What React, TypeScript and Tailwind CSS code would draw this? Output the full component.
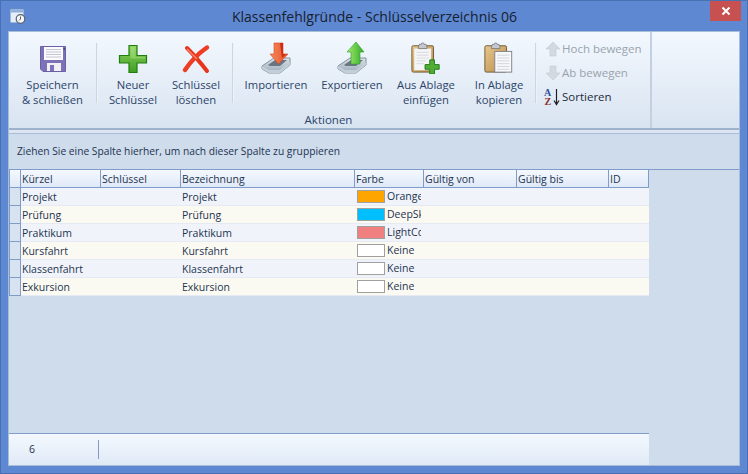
import React from "react";

const font = { fontFamily: '"Open Sans", "Noto Sans", sans-serif' };

function Defs() {
  return (
    <svg width="0" height="0" className="absolute">
      <defs>
        <linearGradient id="gGreen" x1="0" y1="0" x2="0" y2="1">
          <stop offset="0" stopColor="#8fd45f" />
          <stop offset="1" stopColor="#3f9e22" />
        </linearGradient>
        <linearGradient id="gRed" x1="0" y1="0" x2="1" y2="0">
          <stop offset="0" stopColor="#f58a5a" />
          <stop offset="1" stopColor="#e8502c" />
        </linearGradient>
        <linearGradient id="gArrowG" x1="0" y1="0" x2="1" y2="0">
          <stop offset="0" stopColor="#a6ec6a" />
          <stop offset="1" stopColor="#2fa92c" />
        </linearGradient>
        <linearGradient id="gTray" x1="0" y1="0" x2="0" y2="1">
          <stop offset="0" stopColor="#dbe3ea" />
          <stop offset="1" stopColor="#9aa9b8" />
        </linearGradient>
        <linearGradient id="gClip" x1="0" y1="0" x2="1" y2="1">
          <stop offset="0" stopColor="#e8c88f" />
          <stop offset="1" stopColor="#b98a45" />
        </linearGradient>
      </defs>
    </svg>
  );
}

function Floppy() {
  return (
    <svg width="32" height="32" viewBox="0 0 32 32">
      <path d="M3.500 4.500h25v25H6l-2.500-2.500z" fill="#7d72b8" stroke="#6a60a6" />
      <rect x="7" y="5" width="19" height="13" fill="#fbfbfd" />
      <path d="M9 7.500h15M9 10h15M9 12.500h15M9 15h15" stroke="#c4c6d2" strokeWidth="1" />
      <rect x="10" y="21" width="14" height="8" fill="#f1f1f4" />
      <rect x="13" y="23" width="4" height="6" fill="#7d72b8" />
      <rect x="26.500" y="6" width="1.500" height="2" fill="#4d4590" />
    </svg>
  );
}

function Plus() {
  return (
    <svg width="30" height="30" viewBox="0 0 30 30">
      <path d="M11 1.500h8v10h9.500v7.500H19v9.500h-8V19H1.500v-7.500H11z" fill="url(#gGreen)" stroke="#1f7d12" strokeWidth="1.200" />
      <path d="M12.500 3h5v10h9.500v1.500H12.500z" fill="#a9e07f" opacity="0.5" />
    </svg>
  );
}

function Cross() {
  return (
    <svg width="30" height="30" viewBox="0 0 30 30">
      <path d="M6 4 C12 10 19 18 26 27" stroke="#e8341c" strokeWidth="4" strokeLinecap="round" fill="none" />
      <path d="M26 3.500 C18 9 10 17 4 26" stroke="#ee3d22" strokeWidth="4.500" strokeLinecap="round" fill="none" />
      <path d="M6 5 C10 9 13 12 16 15" stroke="#f98a70" strokeWidth="1.200" fill="none" />
    </svg>
  );
}

function Tray({ children }: { children: React.ReactNode }) {
  return (
    <svg width="32" height="32" viewBox="0 0 32 32">
      <path d="M2 24 L14 16 H30 V23 L20 31 H9 L2 27 Z" fill="url(#gTray)" stroke="#6d7c8a" strokeWidth="0.800" />
      <path d="M8 23 L15 18 H27 L20 24 H10 Z" fill="#6a7580" />
      <path d="M2 24 L9 28 H20 L30 20 V23 L20 31 H9 L2 27Z" fill="#c3ced8" />
      {children}
    </svg>
  );
}

function ImportIco() {
  return (
    <Tray>
      <path d="M14 1h9v11h5l-9.500 10L10 12h4z" fill="url(#gRed)" stroke="#d6451f" strokeWidth="0.600" />
      <path d="M20 1h3v11h3l-4 4z" fill="#c92f17" />
    </Tray>
  );
}

function ExportIco() {
  return (
    <Tray>
      <path d="M20 0 L28 10 H24 V22 H15 V10 H11 Z" fill="url(#gArrowG)" stroke="#2d9d2a" strokeWidth="0.600" />
    </Tray>
  );
}

function Clip({ paper = true }: { paper?: boolean }) {
  return (
    <>
      <rect x="1" y="4" width="23" height="28" rx="1.500" fill="url(#gClip)" stroke="#6c5a33" />
      {paper && <rect x="3.500" y="7" width="18" height="23" fill="#f4f5f7" />}
      <path d="M8 5 L9 2.500 H11 A1.500 1.500 0 0 1 14 2.500 H16 L17 5 V7 H8 Z" fill="#c5c9cf" stroke="#6d7078" strokeWidth="0.800" />
    </>
  );
}

function PasteIco() {
  return (
    <svg width="32" height="32" viewBox="0 0 32 34">
      <Clip />
      <path d="M6 11h13M6 14h13M6 17h13M6 20h10M6 23h8" stroke="#d7dae0" />
      <path d="M20 19h5v5h5v5h-5v5h-5v-5h-5v-5h5z" fill="#52ad35" stroke="#1f7a17" />
    </svg>
  );
}

function CopyIco() {
  return (
    <svg width="32" height="32" viewBox="0 0 32 34">
      <Clip paper={false} />
      <rect x="11.500" y="10" width="18" height="22" fill="#f7f8fa" stroke="#7e8288" />
      <path d="M14 14h13M14 17h13M14 20h13M14 23h13M14 26h13M14 29h13" stroke="#cfd3da" />
    </svg>
  );
}

function RibbonButton({ w, icon, lines }: { w: string; icon: React.ReactNode; lines: string[] }) {
  return (
    <div className={`${w} shrink-0 flex flex-col items-center text-[11.250px] leading-[15px] text-[#2c4468]`}>
      <div className="h-[42px] flex items-end justify-center">{icon}</div>
      <div className="mt-[3px] text-center whitespace-nowrap">
        {lines.map((l) => (
          <div key={l}>{l}</div>
        ))}
      </div>
    </div>
  );
}

function Sep({ className = "" }: { className?: string }) {
  return <div className={`w-[2px] h-[60px] mt-[11px] shrink-0 bg-gradient-to-r from-[#bcc9da] to-[#ffffff] ${className}`} />;
}

function SmallArrow({ up }: { up: boolean }) {
  return (
    <svg width="16" height="16" viewBox="0 0 16 16">
      <path
        d={up ? "M8 1 L15 8 H11 V15 H5 V8 H1 Z" : "M8 15 L15 8 H11 V1 H5 V8 H1 Z"}
        fill="#d3d9e0"
        stroke="#c3c9d1"
        strokeWidth="0.600"
      />
    </svg>
  );
}

function SortIco() {
  return (
    <svg width="18" height="18" viewBox="0 0 18 18">
      <text x="0" y="8" fontSize="10" fontWeight="700" fill="#2f4f9a" fontFamily="Liberation Serif, serif">A</text>
      <text x="0.500" y="17" fontSize="10" fontWeight="700" fill="#8c2f2a" fontFamily="Liberation Serif, serif">Z</text>
      <path d="M12.500 1v15M10 12.500l2.500 4 2.500-4" stroke="#222" strokeWidth="1.200" fill="none" />
    </svg>
  );
}

const cols = "grid grid-cols-[12px_80px_80px_174px_69px_93px_92px_40px] grid-rows-[18px]";

const headers = ["", "Kürzel", "Schlüssel", "Bezeichnung", "Farbe", "Gültig von", "Gültig bis", "ID"];

const rows = [
  { k: "Projekt", c: "#ffa500", t: "Orange" },
  { k: "Prüfung", c: "#00bfff", t: "DeepSkyBlue" },
  { k: "Praktikum", c: "#f08080", t: "LightCoral" },
  { k: "Kursfahrt", c: "#ffffff", t: "Keine" },
  { k: "Klassenfahrt", c: "#ffffff", t: "Keine" },
  { k: "Exkursion", c: "#ffffff", t: "Keine" },
];

export default function App() {
  return (
    <div style={font} className="w-[748px] h-[474px] overflow-hidden bg-[#5f88d2] flex flex-col border border-[#4a70b4]">
      <Defs />
      <div className="h-[30px] shrink-0 flex items-center relative">
        <div className="ml-[9px] w-[16px] h-[16px]">
          <svg width="16" height="16" viewBox="0 0 16 16">
            <rect x="0.500" y="1.500" width="13" height="13" rx="1" fill="#e6eef8" stroke="#9fb6d8" />
            <rect x="1" y="2" width="12" height="2.500" fill="#8fb0dc" />
            <circle cx="10.500" cy="11" r="4.300" fill="#f3f5f8" stroke="#59616d" strokeWidth="1.200" />
            <path d="M10.500 8.500V11l-1.500 1.500" stroke="#59616d" fill="none" />
          </svg>
        </div>
        <div className="flex-1 text-center text-[14px] text-[#16202e] pr-[24px] whitespace-nowrap">
          Klassenfehlgründe - Schlüsselverzeichnis 06
        </div>
        <div className="absolute left-[709px] top-0 w-[31px] h-[20px] bg-[#c75050] flex items-center justify-center">
          <svg width="10" height="10" viewBox="0 0 10 10">
            <path d="M1.500 1.500l7 7M8.500 1.500l-7 7" stroke="#fff" strokeWidth="2" />
          </svg>
        </div>
      </div>

      <div className="flex-1 min-h-0 mx-[7px] mb-[7px] border border-[#a9bcd8] bg-[#cfdcec] flex flex-col">
        <div className="h-[98px] shrink-0 flex bg-gradient-to-b from-[#f3f8fe] to-[#d9e4f1] border-b-2 border-[#9fb2cc]">
          <div className="w-[643px] shrink-0 flex flex-col border-r-2 border-[#c3d0e1]">
            <div className="flex h-[80px]">
              <RibbonButton w="w-[87px]" icon={<Floppy />} lines={["Speichern", "& schließen"]} />
              <Sep />
              <RibbonButton w="w-[70px]" icon={<Plus />} lines={["Neuer", "Schlüssel"]} />
              <RibbonButton w="w-[56px]" icon={<Cross />} lines={["Schlüssel", "löschen"]} />
              <Sep className="ml-[8px]" />
              <RibbonButton w="w-[84px]" icon={<ImportIco />} lines={["Importieren"]} />
              <RibbonButton w="w-[68px]" icon={<ExportIco />} lines={["Exportieren"]} />
              <div className="w-[2px] shrink-0" />
              <RibbonButton w="w-[76px]" icon={<PasteIco />} lines={["Aus Ablage", "einfügen"]} />
              <div className="w-[5px] shrink-0" />
              <RibbonButton w="w-[60px]" icon={<CopyIco />} lines={["In Ablage", "kopieren"]} />
              <Sep className="ml-[6px]" />
              <div className="ml-[7px] flex flex-col text-[11.500px] pt-[4px]">
                <div className="h-[25px] flex items-center gap-[1px] pl-[1px] text-[#9aa3ad]">
                  <SmallArrow up />
                  <span>Hoch bewegen</span>
                </div>
                <div className="h-[24px] flex items-center gap-[1px] pl-[1px] text-[#9aa3ad]">
                  <SmallArrow up={false} />
                  <span>Ab bewegen</span>
                </div>
                <div className="h-[24px] flex items-center text-[#1e2c40]">
                  <SortIco />
                  <span>Sortieren</span>
                </div>
              </div>
            </div>
            <div className="text-center pr-[2px] text-[11.500px] leading-[15px] text-[#2c4468]">Aktionen</div>
          </div>
        </div>

        <div className="h-[4px] shrink-0 bg-[#dce5f1] border-b border-[#a9bcd8]" />

        <div className="h-[36px] shrink-0 flex items-center pt-[1px] pl-[8px] text-[10.250px] text-[#1e3350] border-b border-[#7f9ccb]">
          Ziehen Sie eine Spalte hierher, um nach dieser Spalte zu gruppieren
        </div>

        <div className="w-[640px] text-[10.500px] text-[#1e3350]">
          <div className={`${cols} h-[18px]`}>
            {headers.map((h, i) => (
              <div
                key={i}
                className="border-r border-b border-[#7f9ccb] bg-gradient-to-b from-[#f5f9fe] to-[#dfe9f7] pl-[1px] leading-[17px] pt-[1px] whitespace-nowrap overflow-hidden first:border-l"
              >
                {h}
              </div>
            ))}
          </div>
          {rows.map((r, i) => (
            <div key={r.k} className={`${cols} h-[18px] ${i % 2 === 0 ? "bg-[#f0f4fa]" : "bg-[#fbfaf2]"}`}>
              <div className="bg-[#d8e3f1] border-l border-r border-b border-[#7f9ccb]" />
              <div className="pl-[1px] leading-[19px] whitespace-nowrap border-b border-[#e6ebf3]">{r.k}</div>
              <div className="border-b border-[#e6ebf3]" />
              <div className="pl-[1px] leading-[19px] whitespace-nowrap border-b border-[#e6ebf3]">{r.k}</div>
              <div className="flex items-center pl-[2px] pr-[3px] border-b border-[#e6ebf3]">
                <div className="w-[28px] h-[13px] shrink-0 border border-[#a0a0a0]" style={{ backgroundColor: r.c }} />
                <div className="ml-[2px] flex-1 min-w-0 overflow-hidden leading-[17px] whitespace-nowrap">{r.t}</div>
              </div>
              <div className="border-b border-[#e6ebf3]" />
              <div className="border-b border-[#e6ebf3]" />
              <div className="border-b border-[#e6ebf3]" />
            </div>
          ))}
        </div>

        <div className="flex-1" />

        <div className="w-[640px] h-[32px] shrink-0 flex items-center border-t border-[#7f9ccb] bg-gradient-to-b from-[#f3f8fe] to-[#e0eaf6] text-[10.500px] text-[#1e3350]">
          <div className="w-[90px] h-[19px] pl-[20px] leading-[19px] border-r border-[#7f9ccb]">6</div>
        </div>
      </div>
    </div>
  );
}
